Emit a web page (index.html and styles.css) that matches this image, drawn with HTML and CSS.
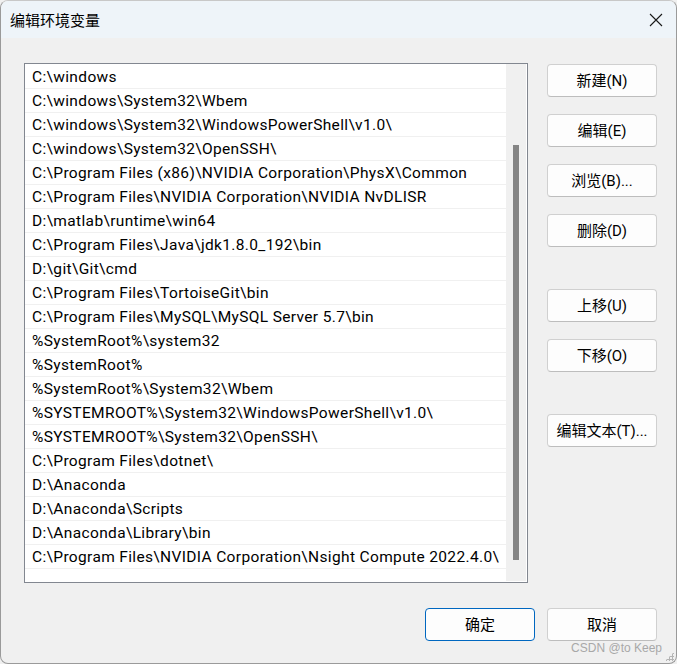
FILE: index.html
```html
<!DOCTYPE html>
<html lang="zh-CN">
<head>
<meta charset="utf-8">
<link rel="stylesheet" href="styles.css">
</head>
<body>
<div class="window">
  <div class="titlebar">
    <span class="title">编辑环境变量</span>
    <svg class="close" width="14" height="14" viewBox="0 0 14 14"><path d="M1 1L13 13M13 1L1 13" stroke="#1a1a1a" stroke-width="1.1" fill="none"/></svg>
  </div>
  <div class="content">
    <div class="main">
      <div class="listbox">
        <div class="rows">
          <div class="row">C:\windows</div>
          <div class="row">C:\windows\System32\Wbem</div>
          <div class="row">C:\windows\System32\WindowsPowerShell\v1.0\</div>
          <div class="row">C:\windows\System32\OpenSSH\</div>
          <div class="row">C:\Program Files (x86)\NVIDIA Corporation\PhysX\Common</div>
          <div class="row">C:\Program Files\NVIDIA Corporation\NVIDIA NvDLISR</div>
          <div class="row">D:\matlab\runtime\win64</div>
          <div class="row">C:\Program Files\Java\jdk1.8.0_192\bin</div>
          <div class="row">D:\git\Git\cmd</div>
          <div class="row">C:\Program Files\TortoiseGit\bin</div>
          <div class="row">C:\Program Files\MySQL\MySQL Server 5.7\bin</div>
          <div class="row">%SystemRoot%\system32</div>
          <div class="row">%SystemRoot%</div>
          <div class="row">%SystemRoot%\System32\Wbem</div>
          <div class="row">%SYSTEMROOT%\System32\WindowsPowerShell\v1.0\</div>
          <div class="row">%SYSTEMROOT%\System32\OpenSSH\</div>
          <div class="row">C:\Program Files\dotnet\</div>
          <div class="row">D:\Anaconda</div>
          <div class="row">D:\Anaconda\Scripts</div>
          <div class="row">D:\Anaconda\Library\bin</div>
          <div class="row">C:\Program Files\NVIDIA Corporation\Nsight Compute 2022.4.0\</div>
        </div>
        <div class="scrollbar"><div class="thumb"></div></div>
      </div>
      <div class="side">
        <button class="btn">新建(N)</button>
        <button class="btn">编辑(E)</button>
        <button class="btn">浏览(B)...</button>
        <button class="btn">删除(D)</button>
        <button class="btn group">上移(U)</button>
        <button class="btn">下移(O)</button>
        <button class="btn group">编辑文本(T)...</button>
      </div>
    </div>
    <div class="footer">
      <button class="btn primary">确定</button>
      <button class="btn">取消</button>
    </div>
  </div>
  <div class="watermark">CSDN @to Keep</div>
  <div class="grip"></div>
</div>
</body>
</html>
```

FILE: styles.css
```css
* { box-sizing: border-box; }
html, body { margin: 0; padding: 0; background: #f0f0f0; }
body {
  font-family: Roboto, "Noto Sans CJK SC", sans-serif;
  color: #000;
}
.window {
  position: relative;
  width: 677px;
  height: 664px;
  background: #f0f0f0;
  border: 1px solid #9a9a9a;
  border-top-color: #c8c8c8;
  border-radius: 8px;
  overflow: hidden;
}
.titlebar {
  height: 37px;
  background: #eef4f9;
  display: flex;
  align-items: center;
  justify-content: space-between;
  padding: 0 13px 0 9px;
}
.title { font-family: "Noto Sans CJK SC", sans-serif; font-size: 15px; line-height: 20px; }
.close { display: block; }
.content { padding: 25px 18px 0 23px; }
.main { display: flex; align-items: flex-start; }
.listbox {
  width: 504px;
  height: 520px;
  border: 1px solid #828790;
  background: #fff;
  display: flex;
  padding: 1px 0 0 0;
}
.rows { flex: 1; }
.row {
  height: 24px;
  border-bottom: 1px solid #f0f0f0;
  padding-left: 7px;
  font-size: 15.5px;
  letter-spacing: 0.35px;
  line-height: 24px;
  white-space: nowrap;
  overflow: hidden;
}
.scrollbar {
  width: 20px;
  margin: -1px 1px 1px 0;
  background: #f0f0f0;
  display: flex;
  justify-content: center;
}
.thumb {
  width: 6px;
  height: 415px;
  margin-top: 81px;
  background: #858585;
}
.side {
  margin-left: 19px;
  display: flex;
  flex-direction: column;
  gap: 17px;
}
.btn {
  width: 110px;
  height: 33px;
  border: 1px solid #d0d0d0;
  border-bottom-color: #bdbdbd;
  border-radius: 4px;
  background: #fdfdfd;
  font-family: Roboto, "Noto Sans CJK SC", sans-serif;
  font-size: 15px;
  line-height: 20px;
  color: #000;
  padding: 0;
}
.side .btn:first-child { margin-top: 1px; }
.btn.group { margin-top: 25px; }
.footer {
  display: flex;
  justify-content: flex-end;
  gap: 12px;
  margin-top: 25px;
  padding-right: 1px;
}
.btn.primary { border: 1px solid #0067c0; }
.watermark {
  position: absolute;
  right: 14px;
  bottom: 8px;
  font-family: "Liberation Sans", sans-serif;
  font-size: 12px;
  color: #a8a8a8;
}
.grip {
  position: absolute;
  right: 2px;
  bottom: 2px;
  width: 9px;
  height: 9px;
  background:
    radial-gradient(circle, #b4b4b4 1px, transparent 1.2px) 0 0 / 3px 3px;
  clip-path: polygon(100% 0, 100% 100%, 0 100%);
}
```
